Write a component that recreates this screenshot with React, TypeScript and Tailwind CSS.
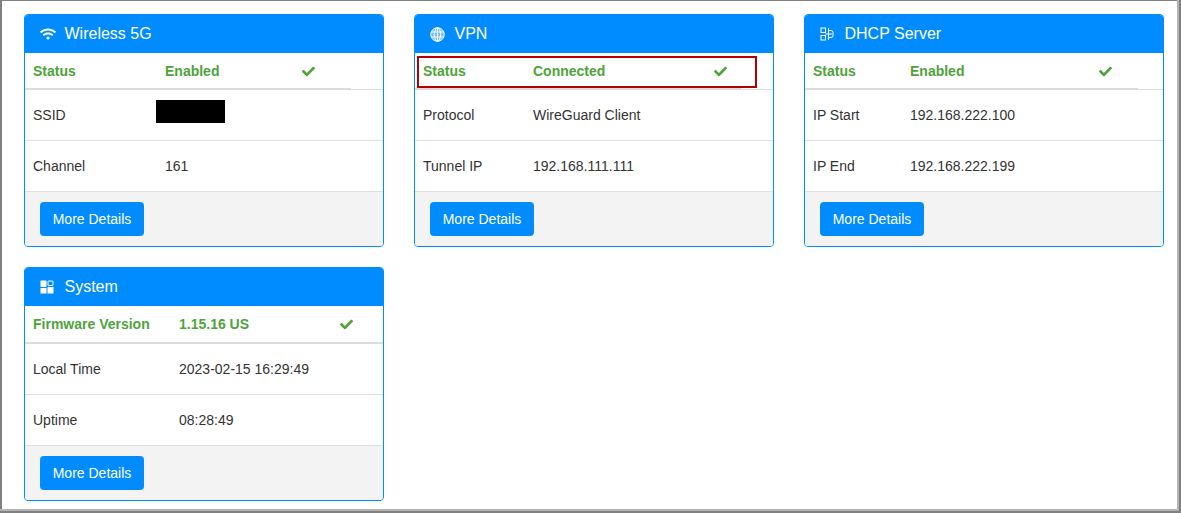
import React from "react";
import { FaCheck, FaWifi } from "react-icons/fa";

type Row = { label: string; value?: string; redacted?: boolean };

type CardProps = {
  title: string;
  icon: React.ReactNode;
  statusLabel: string;
  statusValue: string;
  valueX: string;
  checkX: string;
  lineW: string;
  cardH: string;
  statusH: string;
  rows: Row[];
  highlight?: boolean;
};

const GlobeIcon = () => (
  <svg width="15" height="15" viewBox="0 0 15 15" fill="none" stroke="white" strokeWidth="1">
    <circle cx="7.5" cy="7.5" r="6.8" fill="#cfe8ff" fillOpacity="0.55" />
    <ellipse cx="7.5" cy="7.5" rx="3.2" ry="6.8" />
    <path d="M7.5 .7v13.6M1.2 5h12.6M1.2 10h12.6" />
  </svg>
);

const ServerIcon = () => (
  <svg width="14" height="14" viewBox="0 0 14 14" fill="none" stroke="white" strokeWidth="1">
    <rect x="1" y="1" width="4.5" height="4.5" />
    <rect x="1" y="8.5" width="4.5" height="4.5" />
    <path d="M8.5 1v12M8.5 3.5h2.5a2 2 0 0 1 2 2v3a2 2 0 0 1-2 2H8.5M5.5 7H12" />
  </svg>
);

const DashIcon = () => (
  <svg width="14" height="14" viewBox="0 0 14 14" fill="white">
    <rect x="0.5" y="0.5" width="6" height="6.5" rx="0.5" />
    <rect x="8" y="1" width="5" height="4.5" rx="0.5" fill="none" stroke="white" />
    <rect x="0.5" y="8" width="6" height="5.5" rx="0.5" />
    <rect x="7.5" y="7" width="6" height="6.5" rx="0.5" />
  </svg>
);

function Card({ title, icon, statusLabel, statusValue, valueX, checkX, lineW, cardH, statusH, rows, highlight }: CardProps) {
  return (
    <div className={`relative flex w-[360px] flex-col overflow-hidden rounded-[4px] border border-[#008cff] bg-white ${cardH}`}>
      <div className="flex h-[38px] shrink-0 items-center bg-[#008cff] pl-[15px] text-[16px] text-white">
        <span className="flex w-[24.5px] shrink-0 items-center">{icon}</span>
        {title}
      </div>
      <div className={`relative flex shrink-0 items-center border-b border-[#dfdfdf] pl-[8px] text-[14px] font-bold text-[#4fa33b] ${statusH}`}>
        <span className={valueX}>{statusLabel}</span>
        <span className={checkX}>{statusValue}</span>
        <FaCheck className="text-[13px]" />
        <div className={`absolute bottom-[-1px] left-0 h-[2px] bg-[#dcdcdc] ${lineW}`} />
      </div>
      {rows.map((row) => (
        <div key={row.label} className="flex h-[51px] shrink-0 items-center border-b border-[#dfdfdf] pl-[8px] text-[14px] text-[#333333]">
          <span className={valueX}>{row.label}</span>
          {row.redacted ? <div className="mb-[7px] ml-[-9px] h-[23px] w-[69px] bg-black" /> : <span>{row.value}</span>}
        </div>
      ))}
      <div className="flex flex-1 items-center bg-[#f3f3f3] pl-[15px]">
        <button className="h-[34px] w-[104px] rounded-[4px] bg-[#008cff] text-center text-[14px] text-white">More Details</button>
      </div>
      {highlight && <div className="absolute left-[2px] top-[41px] h-[32px] w-[340px] border-2 border-[#b50000]" />}
    </div>
  );
}

export default function App() {
  return (
    <div className="h-[513px] w-[1181px] overflow-hidden border-b-2 border-r-2 border-[#808080] bg-white font-['Liberation_Sans',Arial,sans-serif]">
      <div className="h-full w-full border-b-2 border-r-2 border-[#b4b4b4]">
        <div className="h-full w-full border-l-2 border-t border-[#808080] pl-[22px] pt-[13px]">
          <div className="grid grid-cols-[360px_360px_360px] gap-x-[30px] gap-y-[20px]">
            <Card
              title="Wireless 5G"
              icon={<FaWifi className="text-[16px]" />}
              statusLabel="Status"
              statusValue="Enabled"
              valueX="w-[132px] shrink-0"
              checkX="w-[137px] shrink-0"
              lineW="w-[326px]"
              cardH="h-[233px]"
              statusH="h-[37px]"
              rows={[
                { label: "SSID", redacted: true },
                { label: "Channel", value: "161" },
              ]}
            />
            <Card
              title="VPN"
              icon={<GlobeIcon />}
              statusLabel="Status"
              statusValue="Connected"
              valueX="w-[110px] shrink-0"
              checkX="w-[181px] shrink-0"
              lineW="w-[326px]"
              cardH="h-[233px]"
              statusH="h-[37px]"
              highlight
              rows={[
                { label: "Protocol", value: "WireGuard Client" },
                { label: "Tunnel IP", value: "192.168.111.111" },
              ]}
            />
            <Card
              title="DHCP Server"
              icon={<ServerIcon />}
              statusLabel="Status"
              statusValue="Enabled"
              valueX="w-[97px] shrink-0"
              checkX="w-[189px] shrink-0"
              lineW="w-[333px]"
              cardH="h-[233px]"
              statusH="h-[37px]"
              rows={[
                { label: "IP Start", value: "192.168.222.100" },
                { label: "IP End", value: "192.168.222.199" },
              ]}
            />
            <Card
              title="System"
              icon={<DashIcon />}
              statusLabel="Firmware Version"
              statusValue="1.15.16 US"
              valueX="w-[146px] shrink-0"
              checkX="w-[161px] shrink-0"
              lineW="w-[358px]"
              cardH="h-[234px]"
              statusH="h-[38px]"
              rows={[
                { label: "Local Time", value: "2023-02-15 16:29:49" },
                { label: "Uptime", value: "08:28:49" },
              ]}
            />
          </div>
        </div>
      </div>
    </div>
  );
}
